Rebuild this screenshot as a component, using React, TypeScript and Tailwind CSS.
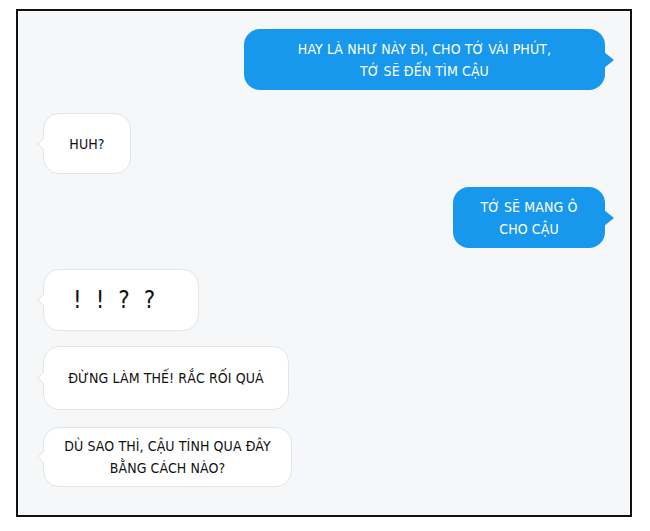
import React from 'react';

const font = { fontFamily: '"DejaVu Sans Condensed", "DejaVu Sans", "Liberation Sans", sans-serif' };

function BlueBubble({ lines, className }: { lines: string[]; className: string }) {
  return (
    <div className={`relative self-end bg-[#1798ec] rounded-[16px] text-white flex flex-col items-center justify-center text-[14px] leading-[22px] tracking-[0.1px] ${className}`}>
      {lines.map((l) => (
        <span key={l}>{l}</span>
      ))}
      <svg className="absolute -right-[9px] top-1/2 -translate-y-1/2" width="10" height="16" viewBox="0 0 10 16">
        <path d="M0 0 L10 8 L0 16 Z" fill="#1798ec" />
      </svg>
    </div>
  );
}

function WhiteBubble({ lines, className, big }: { lines: string[]; className: string; big?: boolean }) {
  return (
    <div className={`relative self-start bg-white border border-[#e2e4e6] rounded-[16px] text-[#111] flex flex-col items-center justify-center ${big ? 'text-[24px] tracking-[14px]' : 'text-[14px] leading-[22px] tracking-[0.1px]'} ${className}`}>
      {lines.map((l) => (
        <span key={l}>{l}</span>
      ))}
      <div className="absolute -left-[5px] top-1/2 -translate-y-1/2 w-[9px] h-[9px] bg-white border-l border-b border-[#e2e4e6] rotate-45" />
    </div>
  );
}

export default function App() {
  return (
    <div className="w-[650px] h-[531px] bg-white pt-[9px] pl-[16px]" style={font}>
      <div className="w-[616px] h-[508px] border-2 border-[#111] bg-[#f6f7f8] flex flex-col px-[25px]">
        <BlueBubble
          className="mt-[18px] w-[361px] h-[61px]"
          lines={['HAY LÀ NHƯ NÀY ĐI, CHO TỚ VÀI PHÚT,', 'TỚ SẼ ĐẾN TÌM CẬU']}
        />
        <WhiteBubble className="mt-[23px] w-[88px] h-[61px]" lines={['HUH?']} />
        <BlueBubble className="mt-[13px] w-[152px] h-[61px]" lines={['TỚ SẼ MANG Ô', 'CHO CẬU']} />
        <WhiteBubble className="mt-[21px] w-[156px] h-[62px] !items-start pl-[29px]" big lines={['!!??']} />
        <WhiteBubble className="mt-[15px] w-[246px] h-[64px]" lines={['ĐỪNG LÀM THẾ! RẮC RỐI QUÁ']} />
        <WhiteBubble
          className="mt-[17px] w-[249px] h-[60px]"
          lines={['DÙ SAO THÌ, CẬU TÍNH QUA ĐÂY', 'BẰNG CÁCH NÀO?']}
        />
      </div>
    </div>
  );
}
